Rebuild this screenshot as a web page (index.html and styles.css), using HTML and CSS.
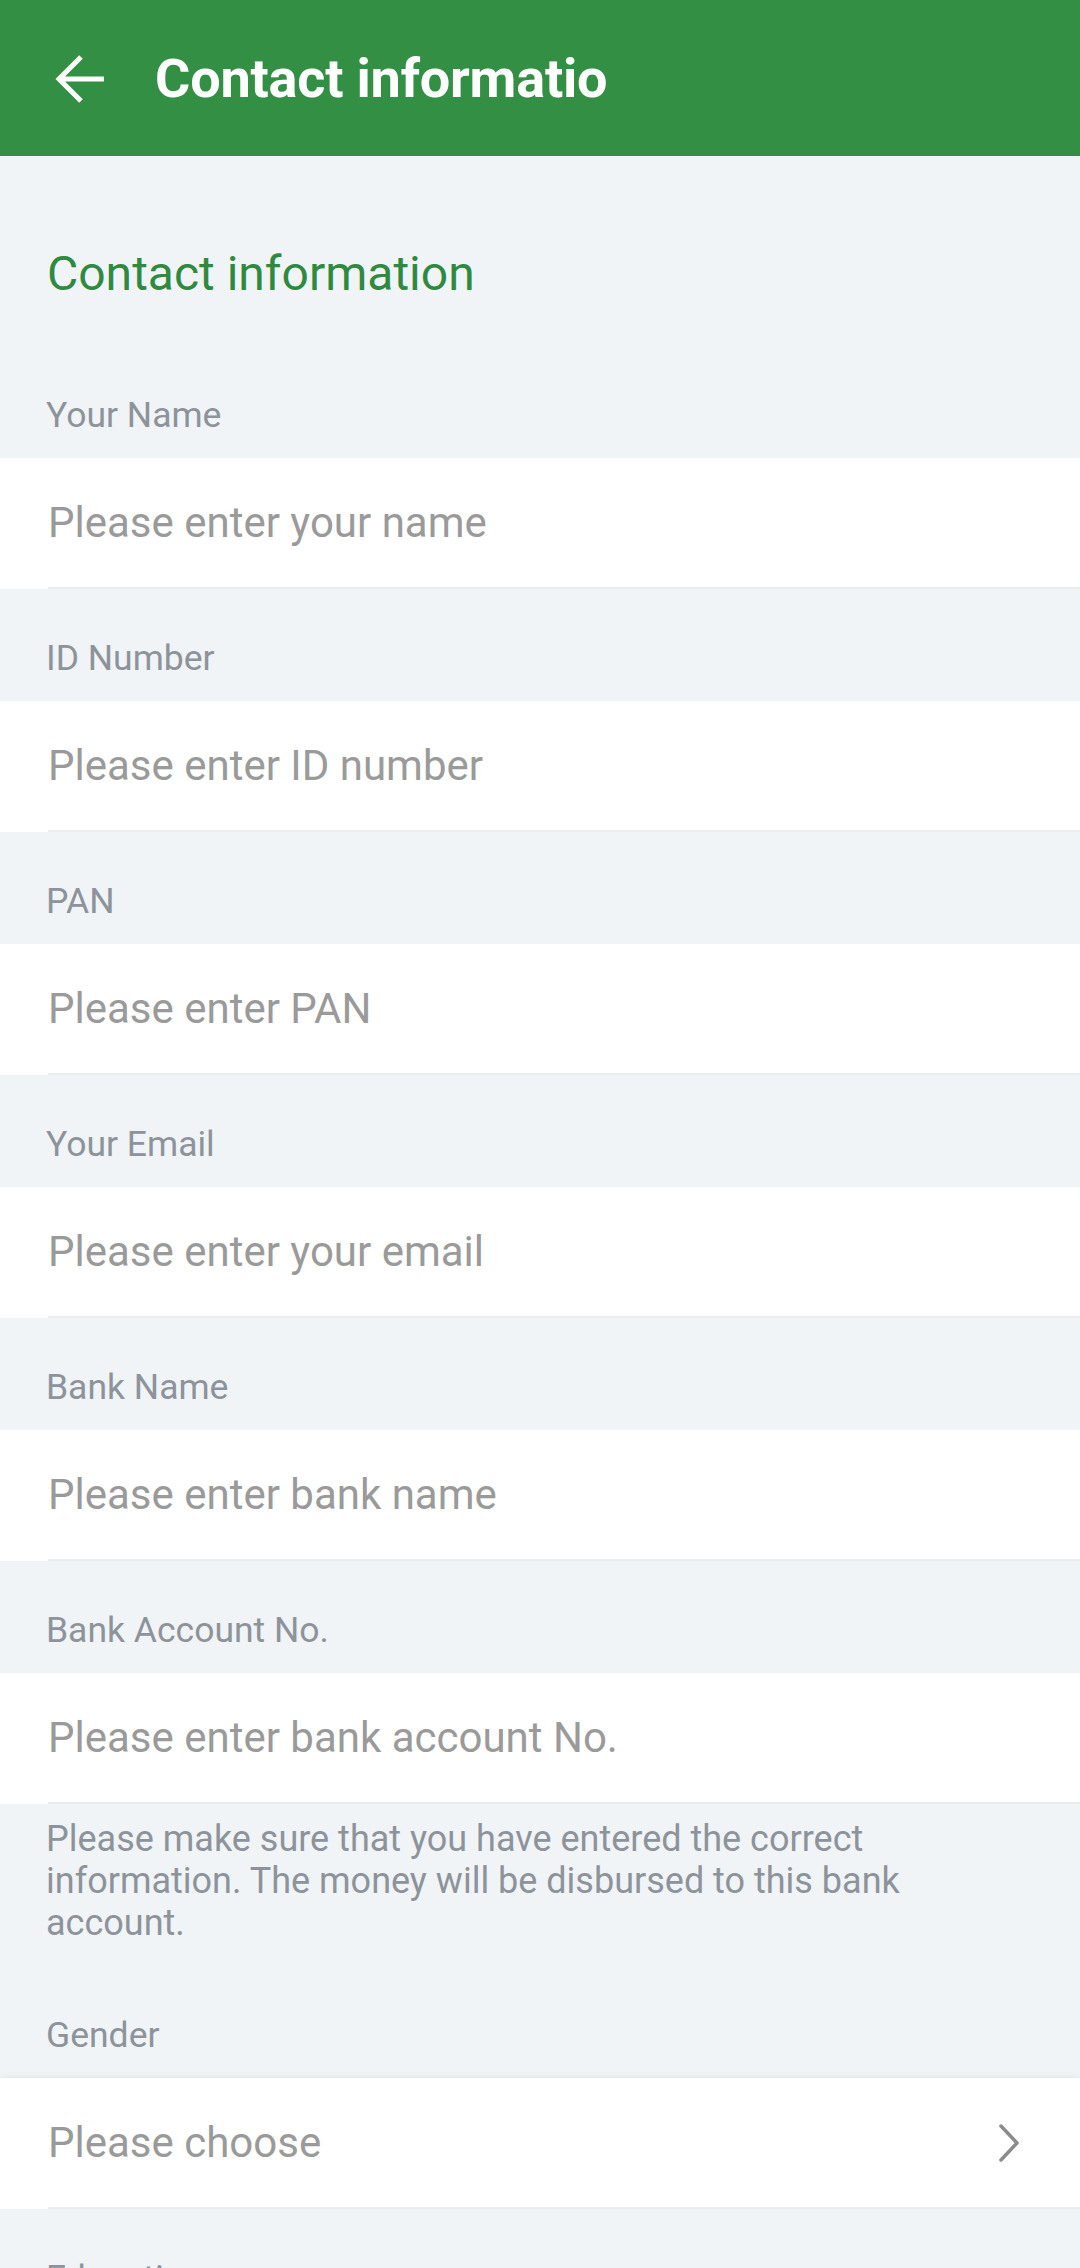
FILE: index.html
```html
<!DOCTYPE html>
<html lang="en">
<head>
<meta charset="utf-8">
<title>Contact information</title>
<link rel="stylesheet" href="styles.css">
</head>
<body>
<header class="appbar">
  <svg class="back" viewBox="0 0 50 50" width="50" height="50" aria-hidden="true">
    <path d="M49 25H4M26 3L4 25L26 47" fill="none" stroke="#ffffff" stroke-width="5" stroke-linejoin="miter"/>
  </svg>
  <h1 class="appbar-title">Contact informatio</h1>
</header>
<main class="form">
  <h2 class="section-title">Contact information</h2>

  <div class="field">
    <div class="label">Your Name</div>
    <div class="row"><div class="row-inner">Please enter your name</div></div>
  </div>
  <div class="field">
    <div class="label">ID Number</div>
    <div class="row"><div class="row-inner">Please enter ID number</div></div>
  </div>
  <div class="field">
    <div class="label">PAN</div>
    <div class="row"><div class="row-inner">Please enter PAN</div></div>
  </div>
  <div class="field">
    <div class="label">Your Email</div>
    <div class="row"><div class="row-inner">Please enter your email</div></div>
  </div>
  <div class="field">
    <div class="label">Bank Name</div>
    <div class="row"><div class="row-inner">Please enter bank name</div></div>
  </div>
  <div class="field">
    <div class="label">Bank Account No.</div>
    <div class="row"><div class="row-inner">Please enter bank account No.</div></div>
  </div>
  <p class="hint">Please make sure that you have entered the correct information. The money will be disbursed to this bank account.</p>
  <div class="field">
    <div class="label">Gender</div>
    <div class="row select"><div class="row-inner">
      <span>Please choose</span>
      <svg class="chev" viewBox="0 0 22 38" width="22" height="38" aria-hidden="true">
        <path d="M3 2L19 19L3 36" fill="none" stroke="#8c8c8c" stroke-width="3.5" stroke-linecap="round" stroke-linejoin="round"/>
      </svg>
    </div></div>
  </div>
  <div class="field">
    <div class="label">Education</div>
  </div>
</main>
</body>
</html>
```

FILE: styles.css
```css
* { box-sizing: border-box; }
html, body {
  margin: 0;
  padding: 0;
  background: #f1f4f7;
  font-family: Roboto, "Liberation Sans", Arial, sans-serif;
}
body {
  height: 2268px;
  overflow: hidden;
}
.appbar {
  height: 156px;
  background: #338f43;
  display: flex;
  align-items: center;
  padding-left: 55px;
  padding-top: 2px;
}
.back { display: block; flex: none; }
.appbar-title {
  margin: 0 0 0 50px;
  color: #ffffff;
  font-size: 54px;
  font-weight: 700;
  line-height: 60px;
  letter-spacing: -0.2px;
}
.form { display: flex; flex-direction: column; }
.section-title {
  margin: 0;
  padding: 90px 48px 44px 47px;
  font-size: 48px;
  line-height: 56px;
  font-weight: 400;
  color: #2f8a3f;
}
.label {
  height: 112px;
  padding: 49px 48px 0 46px;
  font-size: 35.5px;
  line-height: 40px;
  color: #8d939a;
}
.row {
  background: #ffffff;
  padding-left: 48px;
}
.row-inner {
  height: 131px;
  border-bottom: 2px solid #ececec;
  display: flex;
  align-items: center;
  justify-content: space-between;
  padding-right: 60px;
  font-size: 42px;
  color: #9a9a9a;
}
.select { box-shadow: 0 -3px 4px -2px rgba(200, 180, 160, 0.25); }
.chev { display: block; flex: none; }
.hint {
  margin: 0;
  padding: 14px 110px 22px 46px;
  font-size: 36px;
  line-height: 42px;
  color: #8d939a;
}
```
